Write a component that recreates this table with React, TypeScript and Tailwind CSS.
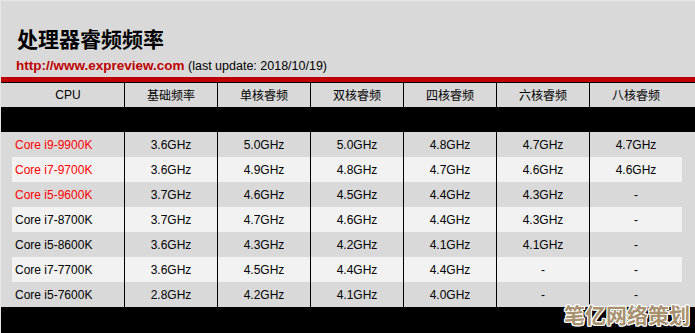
import React from "react";

const heads = ["基础频率", "单核睿频", "双核睿频", "四核睿频", "六核睿频", "八核睿频"];

const rows: { cpu: string; red?: boolean; v: string[] }[] = [
  { cpu: "Core i9-9900K", red: true, v: ["3.6GHz", "5.0GHz", "5.0GHz", "4.8GHz", "4.7GHz", "4.7GHz"] },
  { cpu: "Core i7-9700K", red: true, v: ["3.6GHz", "4.9GHz", "4.8GHz", "4.7GHz", "4.6GHz", "4.6GHz"] },
  { cpu: "Core i5-9600K", red: true, v: ["3.7GHz", "4.6GHz", "4.5GHz", "4.4GHz", "4.3GHz", "-"] },
  { cpu: "Core i7-8700K", v: ["3.7GHz", "4.7GHz", "4.6GHz", "4.4GHz", "4.3GHz", "-"] },
  { cpu: "Core i5-8600K", v: ["3.6GHz", "4.3GHz", "4.2GHz", "4.1GHz", "4.1GHz", "-"] },
  { cpu: "Core i7-7700K", v: ["3.6GHz", "4.5GHz", "4.4GHz", "4.4GHz", "-", "-"] },
  { cpu: "Core i5-7600K", v: ["2.8GHz", "4.2GHz", "4.1GHz", "4.0GHz", "-", "-"] },
];

const latin = "font-['Liberation_Sans',Arial,'Noto_Sans_CJK_SC',sans-serif]";
const cjk = "font-['Noto_Sans_CJK_SC','Liberation_Sans',sans-serif]";

export default function App() {
  return (
    <div className={`relative w-[695px] h-[333px] overflow-hidden bg-[#d9d9d9] border-t border-l border-[#e6e6e6] ${latin}`}>
      <div className={`pl-[16px] pt-[22px] text-[21px] leading-[30px] font-bold text-black ${cjk}`}>
        处理器睿频频率
      </div>
      <div className="pl-[15px] mt-[4px] leading-[16px] whitespace-nowrap">
        <span className="text-[13.5px] font-bold text-[#c00000]">http://www.expreview.com</span>
        <span className="text-[12.5px] text-black"> (last update: 2018/10/19)</span>
      </div>
      <div className="mt-[3px] h-[5px] bg-[#c00000]" />
      <div className="h-px bg-black" />
      {/* header row */}
      <div className="flex h-[24px]">
        <div className="w-[11px]" />
        <div className="w-[112px] flex items-center justify-center text-[12px] leading-[14px] text-black">CPU</div>
        {heads.map((h) => (
          <div
            key={h}
            className={`w-[93px] border-l border-black flex items-center justify-center text-[12px] leading-[14px] text-black ${cjk}`}
          >
            <span>{h}</span>
          </div>
        ))}
      </div>
      <div className="h-[25px] bg-black" />
      {rows.map((r, i) => (
        <div key={r.cpu} className="flex h-[25px]">
          <div className="w-[11px]" />
          <div className={`flex ${i % 2 === 1 ? "bg-[#f2f2f2]" : "bg-[#d9d9d9]"}`}>
            <div
              className={`w-[112px] flex items-center pl-[3px] text-[12px] leading-[14px] ${r.red ? "text-[#ff0000]" : "text-black"}`}
            >
              <span>{r.cpu}</span>
            </div>
            {r.v.map((v, j) => (
              <div
                key={j}
                className="w-[93px] border-l border-black flex items-center justify-center text-[12px] leading-[14px] text-black"
              >
                <span>{v}</span>
              </div>
            ))}
          </div>
        </div>
      ))}
      <div className="h-[26px] bg-black" />
      <div
        className={`absolute left-[563px] top-[303px] text-[21px] leading-[21px] font-bold text-[#a8916f] ${cjk} [text-shadow:1px_1px_0_#fff,-1px_-1px_0_#fff,1px_-1px_0_#fff,-1px_1px_0_#fff,0_1px_0_#fff,0_-1px_0_#fff,1px_0_0_#fff,-1px_0_0_#fff]`}
      >
        笔亿网络策划
      </div>
    </div>
  );
}
